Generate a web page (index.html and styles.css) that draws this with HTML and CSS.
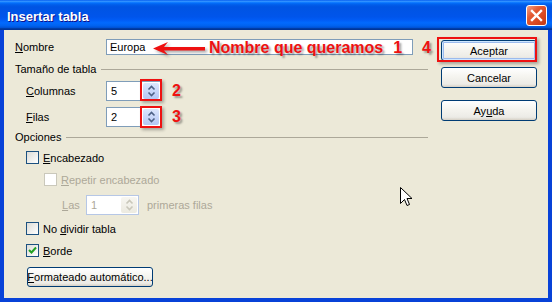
FILE: index.html
```html
<!DOCTYPE html>
<html lang="es">
<head>
    <meta charset="UTF-8">
    <title>Insertar tabla</title>
    <link rel="stylesheet" href="styles.css">
</head>
<body>
    <div class="window">
        <div class="titlebar">
            <span class="title">Insertar tabla</span>
            <span class="close">
                <svg width="13" height="13" viewBox="0 0 13 13"><path d="M2 2 L11 11 M11 2 L2 11" stroke="#fff" stroke-width="2.4" stroke-linecap="square"/></svg>
            </span>
        </div>
        <div class="client">
            <div class="main">
                <div class="row nameRow">
                    <span class="lbl"><u>N</u>ombre</span>
                    <div class="field nameField">Europa</div>
                </div>

                <div class="section"><span>Tamaño de tabla</span><span class="rule"></span></div>

                <div class="row sub first">
                    <span class="lbl"><u>C</u>olumnas</span>
                    <div class="spin">
                        <span class="val">5</span>
                        <span class="btns"><svg width="9" height="12" viewBox="0 0 9 12"><path d="M1.5 4.5 L4.5 1.5 L7.5 4.5 M1.5 7.5 L4.5 10.5 L7.5 7.5" fill="none" stroke="#4d6185" stroke-width="1.6"/></svg></span>
                    </div>
                </div>
                <div class="row sub">
                    <span class="lbl"><u>F</u>ilas</span>
                    <div class="spin">
                        <span class="val">2</span>
                        <span class="btns"><svg width="9" height="12" viewBox="0 0 9 12"><path d="M1.5 4.5 L4.5 1.5 L7.5 4.5 M1.5 7.5 L4.5 10.5 L7.5 7.5" fill="none" stroke="#4d6185" stroke-width="1.6"/></svg></span>
                    </div>
                </div>

                <div class="section opts"><span>Opciones</span><span class="rule"></span></div>

                <div class="row check first">
                    <span class="box"></span><span class="text"><u>E</u>ncabezado</span>
                </div>
                <div class="row check deep off">
                    <span class="box"></span><span class="text"><u>R</u>epetir encabezado</span>
                </div>
                <div class="row lasRow off">
                    <span class="lasLbl"><u>L</u>as</span>
                    <div class="spin small">
                        <span class="val">1</span>
                        <span class="btns"><svg width="9" height="12" viewBox="0 0 9 12"><path d="M1.5 4.5 L4.5 1.5 L7.5 4.5 M1.5 7.5 L4.5 10.5 L7.5 7.5" fill="none" stroke="#c9c7ba" stroke-width="1.6"/></svg></span>
                    </div>
                    <span class="after">primeras filas</span>
                </div>
                <div class="row check wide">
                    <span class="box"></span><span class="text">No <u>d</u>ividir tabla</span>
                </div>
                <div class="row check">
                    <span class="box"><svg width="11" height="11" viewBox="0 0 11 11"><path d="M2 5 L4.5 7.5 L9 2.5" fill="none" stroke="#21a121" stroke-width="2"/></svg></span><span class="text"><u>B</u>orde</span>
                </div>
                <div class="btn autoBtn"><span><u>F</u>ormateado automático...</span></div>
            </div>

            <div class="side">
                <div class="btn default">Aceptar</div>
                <div class="btn">Cancelar</div>
                <div class="btn help">Ay<u>u</u>da</div>
            </div>

            <!-- red notes drawn over the dialog -->
            <svg class="arrow" width="53" height="14" viewBox="0 0 53 14"><path d="M0 6.5 L15 0 L11 5 L52 5 L52 8.5 L11 8.5 L15 13 Z" fill="#ee1111"/></svg>
            <span class="note nameNote">Nombre que queramos<span class="one">1</span></span>
            <span class="note four">4</span>
            <span class="note two">2</span>
            <span class="note three">3</span>
            <span class="mark okMark"></span>
            <span class="mark colMark"></span>
            <span class="mark rowMark"></span>
            <svg class="cursor" width="13" height="21" viewBox="0 0 13 21"><path d="M0.5 0.5 L0.5 16.5 L4.5 12.5 L7 18.5 L9.5 17.5 L7 11.5 L12 11.5 Z" fill="#fff" stroke="#000" stroke-width="1"/></svg>
        </div>
    </div>
</body>
</html>
```

FILE: styles.css
```css
*{
    margin: 0px;
    padding: 0px;
    box-sizing: border-box;
}
body{
    width: 552px;
    height: 302px;
    overflow: hidden;
    font: 11px "Liberation Sans", Arial, sans-serif;
    color: #000;
}
.window{
    height: 302px;
    display: flex;
    flex-direction: column;
    background: #0842d8;
}
.titlebar{
    height: 30px;
    flex: none;
    display: flex;
    justify-content: space-between;
    align-items: flex-start;
    padding: 0px 5px 0px 7px;
    background: linear-gradient(to bottom, #0058ee 0%, #3593ff 4%, #288eff 6%, #127dff 8%, #036ffc 10%, #0262ee 14%, #0057e5 20%, #0054e3 24%, #0055eb 56%, #005bf5 66%, #026afe 76%, #0062ef 86%, #0052d6 92%, #0040ab 94%, #003092 100%);
}
.title{
    padding-top: 9px;
    line-height: 15px;
    color: #fff;
    font-weight: bold;
    font-size: 13px;
    text-shadow: 1px 1px #0f1089;
}
.close{
    margin-top: 5px;
    width: 21px;
    height: 21px;
    border: 1px solid #fff;
    border-radius: 3px;
    background: linear-gradient(135deg, #f3a186 0%, #e45b34 35%, #d8461f 70%, #c23a15 100%);
    display: flex;
    align-items: center;
    justify-content: center;
}
.client{
    flex: 1;
    margin: 0px 4px 4px;
    background: #ece9d8;
    position: relative;
    display: flex;
    padding-left: 11px;
}
.main{
    width: 413px;
    padding-top: 9px;
}
.side{
    margin-left: 13px;
    width: 96px;
    padding-top: 10px;
    display: flex;
    flex-direction: column;
}
.row{
    display: flex;
    align-items: center;
}
.nameRow{
    height: 16px;
}
.nameRow .lbl{
    width: 91px;
}
.field{
    height: 100%;
    border: 1px solid #7f9db9;
    background: #fff;
    padding-left: 3px;
    display: flex;
    align-items: center;
}
.nameField{
    width: 307px;
}
.section{
    display: flex;
    align-items: center;
    height: 14px;
    margin-top: 7px;
}
.section .rule{
    flex: 1;
    margin-left: 5px;
    height: 1px;
    background: #aca899;
}
.section.opts{
    margin-top: 3px;
}
.sub{
    padding-left: 11px;
    height: 20px;
    margin-top: 6px;
}
.sub.first{
    margin-top: 5px;
}
.sub .lbl{
    width: 80px;
}
.spin{
    width: 55px;
    height: 20px;
    border: 1px solid #7f9db9;
    background: #fff;
    padding: 1px;
    display: flex;
    align-items: center;
}
.spin .val{
    flex: 1;
    padding-left: 3px;
}
.spin .btns{
    width: 16px;
    height: 100%;
    border-radius: 2px;
    background: linear-gradient(#dce6fc, #b4c7f4);
    display: flex;
    align-items: center;
    justify-content: center;
}
.spin.small{
    width: 53px;
    border-color: #b6c7e6;
}
.spin.small .btns{
    background: linear-gradient(#f7f6f1, #eceae0);
}
.check{
    height: 13px;
    margin-top: 9px;
    padding-left: 11px;
}
.check.first{
    margin-top: 7px;
}
.check.deep{
    padding-left: 29px;
}
.check.wide{
    margin-top: 7px;
}
.box{
    width: 13px;
    height: 13px;
    border: 1px solid #1c5180;
    background: linear-gradient(135deg, #dcdcd7, #fff);
    display: flex;
    align-items: center;
    justify-content: center;
}
.check .text{
    margin-left: 4px;
}
.off{
    color: #aca899;
}
.off .box{
    border-color: #cac8bb;
    background: #fff;
}
.lasRow{
    height: 20px;
    margin-top: 9px;
    padding-left: 47px;
}
.lasLbl{
    width: 24px;
}
.spin.small .val{
    color: #aca899;
}
.after{
    margin-left: 8px;
}
.btn{
    height: 21px;
    border: 1px solid #003c74;
    border-radius: 3px;
    background: linear-gradient(#ffffff, #f5f4ef 45%, #ecebe6 85%, #d6d0c5);
    display: flex;
    align-items: center;
    justify-content: center;
    white-space: nowrap;
}
.side .btn + .btn{
    margin-top: 6px;
}
.side .help{
    margin-top: 12px !important;
}
.btn.default{
    box-shadow: inset 0px 0px 0px 1px #cee7ff, inset 0px 0px 0px 2px #9cbbed;
}
.autoBtn{
    width: 126px;
    height: 20px;
    margin: 10px 0px 0px 12px;
    overflow: hidden;
}
.note{
    position: absolute;
    color: #ee1111;
    font-weight: bold;
    font-size: 16px;
    line-height: 15px;
    text-shadow: 2px 2px 2px rgba(0, 0, 0, 0.35);
    white-space: nowrap;
}
.nameNote{
    left: 205px;
    top: 10px;
}
.nameNote .one{
    margin-left: 10px;
}
.four{
    left: 418px;
    top: 10px;
}
.two, .three{
    left: 168px;
}
.two{
    top: 53px;
}
.three{
    top: 79px;
}
.arrow{
    position: absolute;
    left: 149px;
    top: 12px;
    filter: drop-shadow(2px 2px 1.5px rgba(0, 0, 0, 0.35));
}
.mark{
    position: absolute;
    border: 2px solid #ee1111;
    box-shadow: 2px 2px 3px rgba(0, 0, 0, 0.3);
}
.okMark{
    left: 433px;
    top: 7px;
    width: 100px;
    height: 25px;
}
.colMark{
    left: 136px;
    top: 49px;
    width: 22px;
    height: 22px;
}
.rowMark{
    left: 136px;
    top: 76px;
    width: 22px;
    height: 22px;
}
.cursor{
    position: absolute;
    left: 396px;
    top: 157px;
}
```
